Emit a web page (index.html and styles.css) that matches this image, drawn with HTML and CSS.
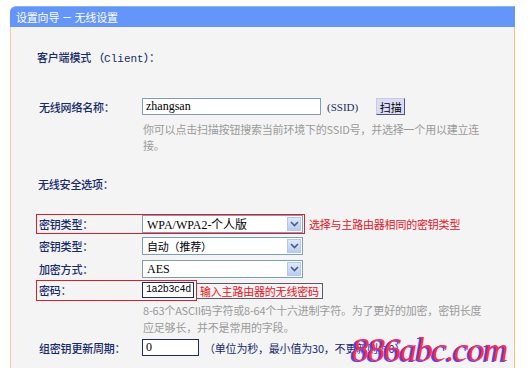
FILE: index.html
```html
<!DOCTYPE html>
<html lang="zh-CN">
<head>
  <meta charset="UTF-8" />
  <title>设置向导 - 无线设置</title>
  <link rel="stylesheet" href="styles.css">
</head>
<body>
  <div class="panel">
    <div class="panel-head">设置向导 － 无线设置</div>
    <div class="panel-body">
      <p class="section">客户端模式 （<span class="latin">Client</span>）：</p>

      <div class="row row-ssid">
        <div class="box">
          <span class="label">无线网络名称：</span>
          <span class="textbox ssid-input">zhangsan</span>
        </div>
        <span class="latin">(SSID)</span>
        <button class="scan-btn">扫描</button>
      </div>
      <p class="hint">你可以点击扫描按钮搜索当前环境下的SSID号，并选择一个用以建立连接。</p>

      <p class="section section-sec">无线安全选项：</p>

      <div class="row row-first">
        <div class="box marked">
          <span class="label">密钥类型：</span>
          <div class="select"><span class="value latin">WPA/WPA2-个人版</span><span class="arrow"><svg width="9" height="6" viewBox="0 0 9 6"><path d="M1 1 L4.5 4.5 L8 1" fill="none" stroke="#4a5a80" stroke-width="1.6"/></svg></span></div>
        </div>
        <span class="note">选择与主路由器相同的密钥类型</span>
      </div>

      <div class="row row-second">
        <div class="box">
          <span class="label">密钥类型：</span>
          <div class="select"><span class="value">自动（推荐）</span><span class="arrow"><svg width="9" height="6" viewBox="0 0 9 6"><path d="M1 1 L4.5 4.5 L8 1" fill="none" stroke="#4a5a80" stroke-width="1.6"/></svg></span></div>
        </div>
      </div>

      <div class="row row-third">
        <div class="box">
          <span class="label">加密方式：</span>
          <div class="select"><span class="value latin">AES</span><span class="arrow"><svg width="9" height="6" viewBox="0 0 9 6"><path d="M1 1 L4.5 4.5 L8 1" fill="none" stroke="#4a5a80" stroke-width="1.6"/></svg></span></div>
        </div>
      </div>

      <div class="row row-pass">
        <div class="box marked pass-box">
          <span class="label">密码：</span>
          <span class="textbox pass-input">1a2b3c4d</span>
        </div>
        <span class="note note-boxed">输入主路由器的无线密码</span>
      </div>
      <p class="hint hint-pass">8-63个ASCII码字符或8-64个十六进制字符。为了更好的加密，密钥长度应足够长，并不是常用的字段。</p>

      <div class="row row-period">
        <div class="box">
          <span class="label">组密钥更新周期：</span>
          <span class="textbox period-input">0</span>
        </div>
        <span class="unit">（单位为秒，最小值为30，不更新则为0）</span>
      </div>
    </div>
    <div class="watermark">886abc.com</div>
  </div>
</body>
</html>
```

FILE: styles.css
```css
body {
  margin: 0;
  padding-top: 6px;
  background: #fff;
  font-family: "Noto Sans CJK SC", sans-serif;
  font-size: 11px;
  letter-spacing: -0.2px;
  color: #16296a;
  overflow: hidden;
}

.panel {
  position: relative;
  margin-left: 10px;
  width: 505px;
}

.panel-head {
  height: 21px;
  line-height: 21px;
  padding-left: 6px;
  background: #6495f8;
  border-top: 1px solid #8db0fb;
  box-sizing: border-box;
  border-radius: 6px 0 0 0;
  color: #fff;
}

.panel-body {
  height: 341px;
  box-sizing: border-box;
  padding: 22px 0 0 25px;
  background: #f4f4f4;
  border-left: 1px solid #f4cc94;
  border-right: 1px solid #f2c384;
}

p {
  margin: 0;
}

.latin {
  font-family: "Liberation Serif", serif;
  letter-spacing: 0;
}

.section {
  line-height: 16px;
  margin-left: 1px;
  font-weight: 500;
}

.section .latin {
  font-family: "Liberation Mono", monospace;
  font-size: 11px;
}

.section-sec {
  margin-top: 23px;
  margin-left: 2px;
}

.row {
  display: flex;
  align-items: center;
  gap: 4px;
}

.box {
  display: flex;
  align-items: center;
  border: 1px solid transparent;
  padding: 0 1px 0 2px;
}

.box.marked {
  border-color: #d8202c;
}

.label {
  width: 103px;
  font-weight: 500;
}

.textbox {
  display: inline-block;
  box-sizing: border-box;
  height: 17px;
  line-height: 15px;
  padding-left: 3px;
  background: #fff;
  border: 1px solid #7f9db9;
  color: #000;
  font-family: "Liberation Serif", serif;
  font-size: 12px;
  letter-spacing: 0;
}

.row-ssid {
  margin-top: 30px;
}

.ssid-input {
  width: 179px;
}

.scan-btn {
  margin-left: 14px;
  width: 29px;
  height: 17px;
  padding: 0;
  background: #dcdcf6;
  border: 1px solid #4a5480;
  border-top-color: #c8c8e8;
  border-left-color: #c8c8e8;
  font-family: "Noto Sans CJK SC", sans-serif;
  font-size: 11px;
  line-height: 14px;
  color: #000;
}

.hint {
  margin-top: 5px;
  padding-left: 107px;
  width: 346px;
  line-height: 16px;
  color: #9a9a9a;
}

.row-first {
  margin-top: 22px;
}

.row-second {
  margin-top: 2px;
}

.row-third {
  margin-top: 3px;
}

.row-pass {
  margin-top: 1px;
}

.select {
  display: flex;
  align-items: center;
  justify-content: space-between;
  box-sizing: border-box;
  width: 161px;
  height: 18px;
  background: #fff;
  border: 1px solid #7f9db9;
  color: #000;
}

.select .value {
  padding-left: 4px;
  font-size: 11px;
}

.select .value.latin {
  font-size: 12px;
}

.arrow {
  display: flex;
  align-items: center;
  justify-content: center;
  width: 14px;
  height: 14px;
  margin-right: 1px;
  background: linear-gradient(#dfe8fb, #b9cdf3);
  border: 1px solid #b4c6ea;
  box-sizing: border-box;
}

.note {
  color: #e8101c;
  font-size: 11px;
}

.pass-box {
  padding: 1px 2px 2px 2px;
}

.pass-input {
  width: 52px;
  height: 16px;
  line-height: 14px;
  border-color: #1c2a66;
  padding-left: 3px;
  font-family: "Liberation Mono", monospace;
  font-size: 10px;
  letter-spacing: -0.4px;
}

.note-boxed {
  margin-left: -5px;
  padding: 0 3px 0 4px;
  height: 16px;
  line-height: 14px;
  box-sizing: border-box;
  border: 1px solid #5a5a6a;
  border-left: none;
}

.hint-pass {
  margin-top: 1px;
  line-height: 17px;
}

.row-period {
  margin-top: 2px;
  gap: 3px;
}

.period-input {
  width: 57px;
  border-color: #1c2a66;
  line-height: 15px;
}

.unit {
  color: #16296a;
}

.watermark {
  position: absolute;
  left: 342px;
  top: 324px;
  font-family: "Liberation Serif", serif;
  font-style: italic;
  font-size: 34px;
  letter-spacing: -1px;
  line-height: 40px;
  white-space: nowrap;
  color: #ff2b4a;
  text-shadow: -2px 1px 0 #4b4cff;
}
```
